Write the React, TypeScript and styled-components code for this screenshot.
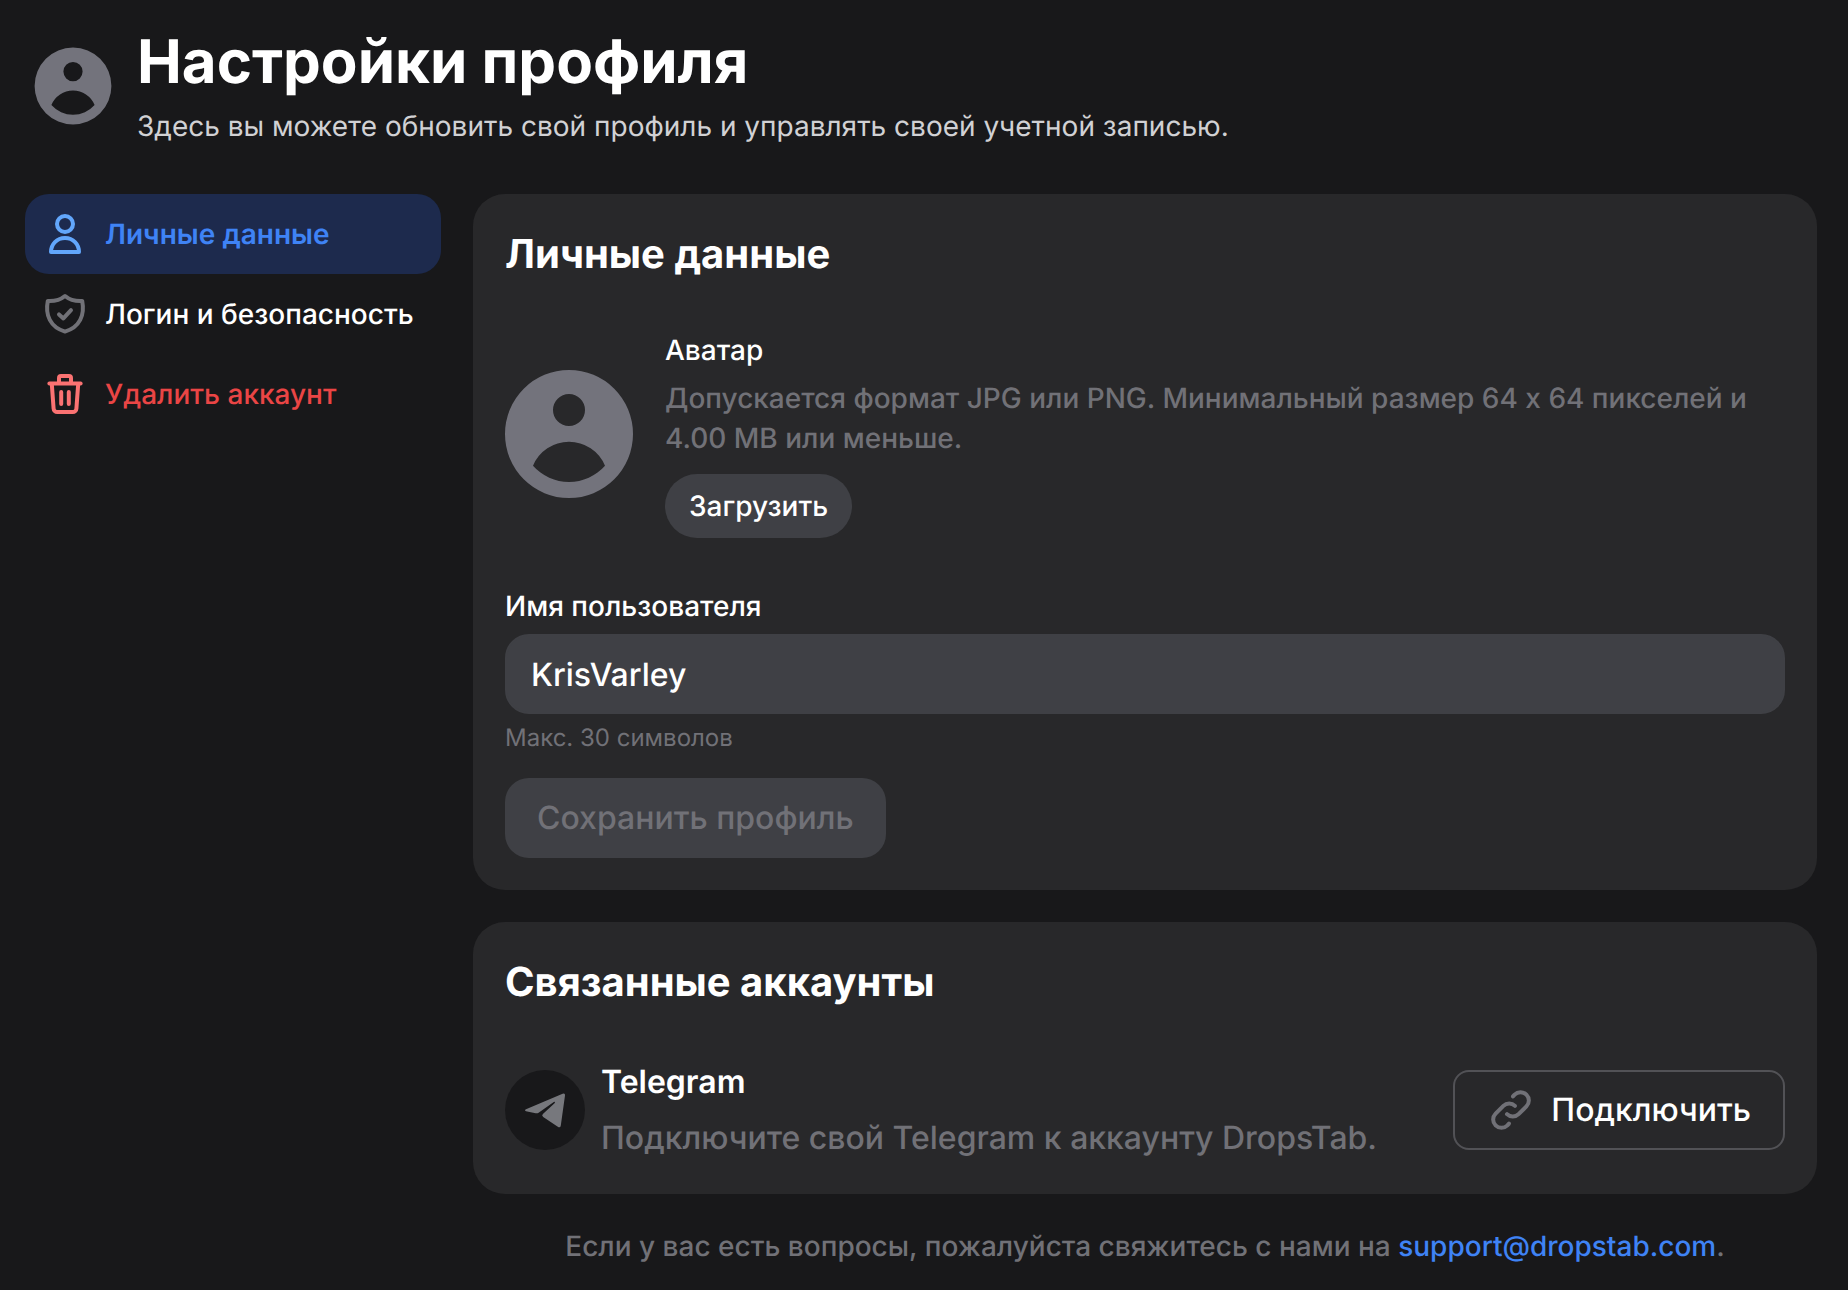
import React from 'react';
import styled, { createGlobalStyle, css } from 'styled-components';

const color = {
  page: '#18181a',
  card: '#28282a',
  field: '#3f4045',
  muted: '#717177',
  avatar: '#73737c',
  white: '#ffffff',
};

const GlobalStyle = createGlobalStyle`
  *, *::before, *::after { box-sizing: border-box; }
  html, body { margin: 0; background: ${color.page}; }
  body, button, input {
    font-family: Inter, "Liberation Sans", sans-serif;
    text-rendering: geometricPrecision;
  }
  h1, h2, h3, p { margin: 0; }
`;

const Page = styled.div`
  min-height: 100vh;
  padding: 26px 31px 24px 25px;
  background: ${color.page};
  color: ${color.white};
  font-size: 28px;
  line-height: 40px;
  font-weight: 500;
`;

const Header = styled.header`
  display: flex;
  align-items: center;
  gap: 16px;
  margin-bottom: 48px;
`;

const HeaderText = styled.div`
  display: flex;
  flex-direction: column;
  gap: 8px;
`;

const PageTitle = styled.h1`
  font-size: 60px;
  line-height: 72px;
  font-weight: 700;
`;

const Subtitle = styled.p`
  font-weight: 400;
  color: #d1d1d4;
`;

const Columns = styled.div`
  display: flex;
  align-items: flex-start;
  gap: 32px;
`;

const Sidebar = styled.nav`
  flex: 0 0 416px;
  display: flex;
  flex-direction: column;
`;

type Tone = 'active' | 'plain' | 'danger';

const tones = {
  active: css`
    background: #1d2a4d;
    color: #3f83f5;
    font-weight: 600;
    svg { color: #62a6fb; }
  `,
  plain: css`
    color: ${color.white};
    svg { color: ${color.muted}; }
  `,
  danger: css`
    color: #ea4545;
    svg { color: #fa7272; }
  `,
};

const SidebarLink = styled.a<{ $tone: Tone }>`
  display: flex;
  align-items: center;
  gap: 16px;
  height: 80px;
  padding: 0 16px;
  border-radius: 24px;
  text-decoration: none;
  white-space: nowrap;
  ${({ $tone }) => tones[$tone]}
`;

const Main = styled.main`
  flex: 1;
  min-width: 0;
  display: flex;
  flex-direction: column;
  gap: 32px;
`;

const Card = styled.section`
  display: flex;
  flex-direction: column;
  gap: 48px;
  padding: 32px;
  border-radius: 32px;
  background: ${color.card};
`;

const CardTitle = styled.h2`
  font-size: 40px;
  line-height: 56px;
  font-weight: 700;
`;

const AvatarRow = styled.div`
  display: flex;
  align-items: center;
  gap: 32px;
`;

const AvatarInfo = styled.div`
  flex: 1;
  display: flex;
  flex-direction: column;
  align-items: flex-start;
`;

const AvatarHeading = styled.h3`
  font: inherit;
  margin-bottom: 8px;
`;

const Note = styled.p`
  color: ${color.muted};
`;

const UploadButton = styled.button`
  height: 64px;
  margin-top: 16px;
  padding: 0 24px;
  border: 0;
  border-radius: 32px;
  background: ${color.field};
  color: ${color.white};
  font-size: 28px;
  line-height: 40px;
  font-weight: 500;
  cursor: pointer;
`;

const Form = styled.form`
  display: flex;
  flex-direction: column;
  align-items: flex-start;
  gap: 8px;
`;

const NameInput = styled.input`
  width: 100%;
  height: 80px;
  padding: 0 24px;
  border: 2px solid ${color.field};
  border-radius: 24px;
  background: ${color.field};
  color: ${color.white};
  font-size: 32px;
  line-height: 48px;
  font-weight: 500;
`;

const Hint = styled.p`
  font-size: 24px;
  line-height: 32px;
  font-weight: 400;
  color: ${color.muted};
`;

const SaveButton = styled.button`
  height: 80px;
  margin-top: 16px;
  padding: 0 32px;
  border: 0;
  border-radius: 24px;
  background: ${color.field};
  color: ${color.muted};
  font-size: 32px;
  line-height: 48px;
  font-weight: 500;
`;

const AccountRow = styled.div`
  display: flex;
  align-items: center;
  gap: 16px;
`;

const AccountText = styled.div`
  flex: 1;
  display: flex;
  flex-direction: column;
  gap: 8px;
  font-size: 32px;
  line-height: 48px;
`;

const AccountName = styled.h3`
  font: inherit;
  font-weight: 600;
`;

const ConnectButton = styled.button`
  display: flex;
  align-items: center;
  gap: 16px;
  height: 80px;
  padding: 0 32px;
  border: 2px solid #525256;
  border-radius: 16px;
  background: transparent;
  color: ${color.white};
  font-size: 32px;
  line-height: 48px;
  font-weight: 500;
  white-space: nowrap;
  cursor: pointer;
  svg { color: ${color.muted}; }
`;

const Support = styled.p`
  text-align: center;
  color: ${color.muted};
`;

const SupportLink = styled.a`
  color: #3f83f5;
  text-decoration: none;
`;

const Svg = styled.svg`
  display: block;
  flex: none;
`;

function Icon({ children }: { children: React.ReactNode }) {
  return (
    <Svg
      width="48"
      height="48"
      viewBox="0 0 24 24"
      fill="none"
      stroke="currentColor"
      strokeWidth="2"
      strokeLinecap="round"
      strokeLinejoin="round"
      aria-hidden="true"
    >
      {children}
    </Svg>
  );
}

function Avatar({ size, inset = 0 }: { size: number; inset?: number }) {
  const box = 128 + inset * 2;
  return (
    <Svg width={size} height={size} viewBox={`${-inset} ${-inset} ${box} ${box}`} aria-hidden="true">
      <path
        fill={color.avatar}
        fillRule="evenodd"
        d="M64 0a64 64 0 1 0 0 128A64 64 0 0 0 64 0ZM64 24a16 16 0 1 1 0 32a16 16 0 0 1 0-32ZM28 95.700A39 39 0 0 1 100 95.700A48 48 0 0 1 28 95.700Z"
      />
    </Svg>
  );
}

const PersonIcon = () => (
  <Icon>
    <circle cx="12" cy="7" r="4" />
    <path d="M12 14c-4.100 0-7 3.100-7 7h14c0-3.900-2.900-7-7-7Z" />
  </Icon>
);

const ShieldIcon = () => (
  <Icon>
    <path d="M12 3C9.700 4.900 7 5.700 3.400 5.500C2 12.500 4.600 18.600 12 20.800C19.400 18.600 22 12.500 20.600 5.500C17 5.700 14.300 4.900 12 3Z" />
    <path d="M9 12.200l2.200 2L15 10.100" />
  </Icon>
);

const TrashIcon = () => (
  <Icon>
    <path d="M4.200 6.700h15.600" />
    <path d="M9 6.500V4a1 1 0 0 1 1-1h4a1 1 0 0 1 1 1v2.500" />
    <path d="M5.400 7l.9 12.300A1.800 1.800 0 0 0 8.100 21h7.800a1.800 1.800 0 0 0 1.800-1.700L18.600 7" />
    <path d="M10.100 11v6M13.900 11v6" />
  </Icon>
);

const LinkIcon = () => (
  <Icon>
    <path d="M13 5.200l.8-.9a4.100 4.100 0 0 1 5.900 5.900l-3.900 3.900a4.100 4.100 0 0 1-5.800 0" />
    <path d="M11 18.800l-.8.9a4.100 4.100 0 0 1-5.900-5.900l3.900-3.900a4.100 4.100 0 0 1 5.800 0" />
  </Icon>
);

const TelegramIcon = () => (
  <Svg width="80" height="80" viewBox="0 0 80 80" aria-hidden="true">
    <circle cx="40" cy="40" r="40" fill={color.page} />
    <path
      fill="#77787d"
      d="M21 39.200L57.600 23.700Q60.300 22.800 60 25.600L55.800 55.500Q55.300 58.400 52.800 56.800L38.200 47Q36.300 45.600 37.900 44L49.800 32.900Q50.400 31.500 48.800 32L33.600 42.700Q32.200 43.500 30.600 43.200L21 41.200Q19 40.300 21 39.200Z"
    />
  </Svg>
);

export default function App() {
  return (
    <>
      <GlobalStyle />
      <Page>
        <Header>
          <Avatar size={96} inset={16} />
          <HeaderText>
            <PageTitle>Настройки профиля</PageTitle>
            <Subtitle>Здесь вы можете обновить свой профиль и управлять своей учетной записью.</Subtitle>
          </HeaderText>
        </Header>
        <Columns>
          <Sidebar>
            <SidebarLink href="#personal" $tone="active" aria-current="page">
              <PersonIcon />
              Личные данные
            </SidebarLink>
            <SidebarLink href="#security" $tone="plain">
              <ShieldIcon />
              Логин и безопасность
            </SidebarLink>
            <SidebarLink href="#delete" $tone="danger">
              <TrashIcon />
              Удалить аккаунт
            </SidebarLink>
          </Sidebar>
          <Main>
            <Card id="personal">
              <CardTitle>Личные данные</CardTitle>
              <AvatarRow>
                <Avatar size={128} />
                <AvatarInfo>
                  <AvatarHeading>Аватар</AvatarHeading>
                  <Note>
                    Допускается формат JPG или PNG. Минимальный размер 64 x 64 пикселей и 4.00 MB или меньше.
                  </Note>
                  <UploadButton type="button">Загрузить</UploadButton>
                </AvatarInfo>
              </AvatarRow>
              <Form onSubmit={(e) => e.preventDefault()}>
                <label htmlFor="username">Имя пользователя</label>
                <NameInput
                  id="username"
                  type="text"
                  defaultValue="KrisVarley"
                  maxLength={30}
                  aria-describedby="username-hint"
                />
                <Hint id="username-hint">Макс. 30 символов</Hint>
                <SaveButton type="submit" disabled>
                  Сохранить профиль
                </SaveButton>
              </Form>
            </Card>
            <Card>
              <CardTitle>Связанные аккаунты</CardTitle>
              <AccountRow>
                <TelegramIcon />
                <AccountText>
                  <AccountName>Telegram</AccountName>
                  <Note>Подключите свой Telegram к аккаунту DropsTab.</Note>
                </AccountText>
                <ConnectButton type="button">
                  <LinkIcon />
                  Подключить
                </ConnectButton>
              </AccountRow>
            </Card>
            <Support>
              Если у вас есть вопросы, пожалуйста свяжитесь с нами на{' '}
              <SupportLink href="mailto:support@dropstab.com">support@dropstab.com</SupportLink>.
            </Support>
          </Main>
        </Columns>
      </Page>
    </>
  );
}
